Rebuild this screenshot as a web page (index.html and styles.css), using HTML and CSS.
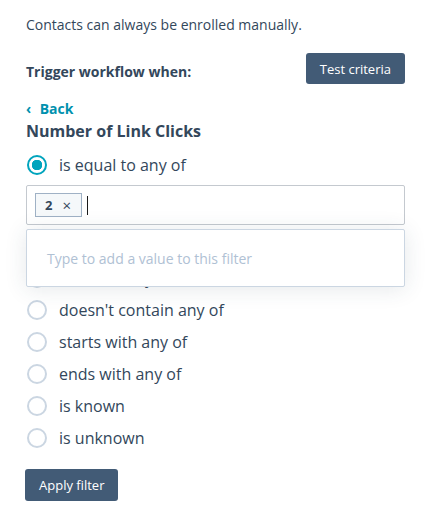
FILE: index.html
```html
<!DOCTYPE html>
<html lang="en">

<head>
    <meta charset="UTF-8">
    <meta name="viewport" content="width=device-width, initial-scale=1.0">
    <title>Enrollment trigger filter</title>
    <link rel="stylesheet" href="styles.css">
</head>

<body>
    <div class="panel">
        <p class="note">Contacts can always be enrolled manually.</p>

        <div class="trigger-row">
            <span class="trigger-label">Trigger workflow when:</span>
            <button class="btn">Test criteria</button>
        </div>

        <a class="back" href="#"><span class="chevron">&#8249;</span> Back</a>
        <h2 class="filter-title">Number of Link Clicks</h2>

        <div class="options">
            <label class="option"><span class="radio checked"></span>is equal to any of</label>

            <div class="value-field">
                <span class="tag">2 <span class="tag-remove">&times;</span></span>
                <span class="caret"></span>
                <div class="dropdown">
                    <span class="placeholder">Type to add a value to this filter</span>
                </div>
            </div>

            <label class="option"><span class="radio"></span>is not equal to any of</label>
            <label class="option"><span class="radio"></span>contains any of</label>
            <label class="option"><span class="radio"></span>doesn't contain any of</label>
            <label class="option"><span class="radio"></span>starts with any of</label>
            <label class="option"><span class="radio"></span>ends with any of</label>
            <label class="option"><span class="radio"></span>is known</label>
            <label class="option"><span class="radio"></span>is unknown</label>
        </div>

        <button class="btn apply">Apply filter</button>
    </div>
</body>

</html>
```

FILE: styles.css
```css
body {
    margin: 0;
    font-family: "Open Sans", "Noto Sans", sans-serif;
    color: #33475b;
    background-color: white;
}

.panel {
    width: 379px;
    padding: 15px 0 0 26px;
}

.note {
    margin: 0;
    font-size: 14px;
    line-height: 20px;
}

.trigger-row {
    display: flex;
    justify-content: space-between;
    align-items: flex-end;
    margin-top: 18px;
}

.trigger-label {
    font-size: 14px;
    font-weight: 700;
    line-height: 20px;
    padding-bottom: 2px;
}

.btn {
    height: 32px;
    padding: 0 14px;
    background-color: #425b76;
    color: white;
    border: none;
    border-radius: 3px;
    font-family: inherit;
    font-size: 13px;
    cursor: pointer;
}

.trigger-row .btn {
    height: 31px;
}

.back {
    display: block;
    margin-top: 16px;
    font-size: 14px;
    font-weight: 700;
    line-height: 18px;
    color: #0091ae;
    text-decoration: none;
}

.chevron {
    display: inline-block;
    width: 10px;
}

.filter-title {
    margin: 2px 0 0;
    font-size: 16px;
    font-weight: 700;
    line-height: 22px;
}

.options {
    margin-top: 7px;
}

.option {
    display: flex;
    align-items: center;
    height: 32px;
    font-size: 16px;
}

.radio {
    box-sizing: border-box;
    width: 20px;
    height: 20px;
    margin: 0 12px 0 1px;
    border: 2px solid #cbd6e2;
    border-radius: 50%;
    background-color: white;
}

.radio.checked {
    border-color: #00a4bd;
    background: radial-gradient(circle, #00a4bd 0 5px, white 5.5px);
}

.value-field {
    position: relative;
    display: flex;
    align-items: center;
    height: 40px;
    margin: 4px 0 5px;
    padding: 0 8px;
    box-sizing: border-box;
    border: 1px solid #c4c9cf;
    border-radius: 2px;
}

.tag {
    box-sizing: border-box;
    height: 24px;
    padding: 0 10px 0 9px;
    display: flex;
    align-items: center;
    gap: 10px;
    background-color: #f5f8fa;
    border: 1px solid #9fb1c5;
    font-size: 13px;
    font-weight: 700;
}

.tag-remove {
    font-weight: 400;
    font-size: 15px;
}

.caret {
    width: 1px;
    height: 19px;
    margin-left: 5px;
    background-color: #1a1a1a;
}

.dropdown {
    position: absolute;
    top: 43px;
    left: -1px;
    right: -1px;
    height: 58px;
    box-sizing: border-box;
    padding: 0 20px;
    display: flex;
    align-items: center;
    background-color: white;
    border: 1px solid #cbd6e2;
    border-radius: 2px;
    box-shadow: 0 2px 22px rgba(45, 62, 80, 0.12);
    z-index: 1;
}

.placeholder {
    font-size: 14px;
    color: #b0c1d4;
}

.apply {
    margin: 15px 0 0 -1px;
}
```
